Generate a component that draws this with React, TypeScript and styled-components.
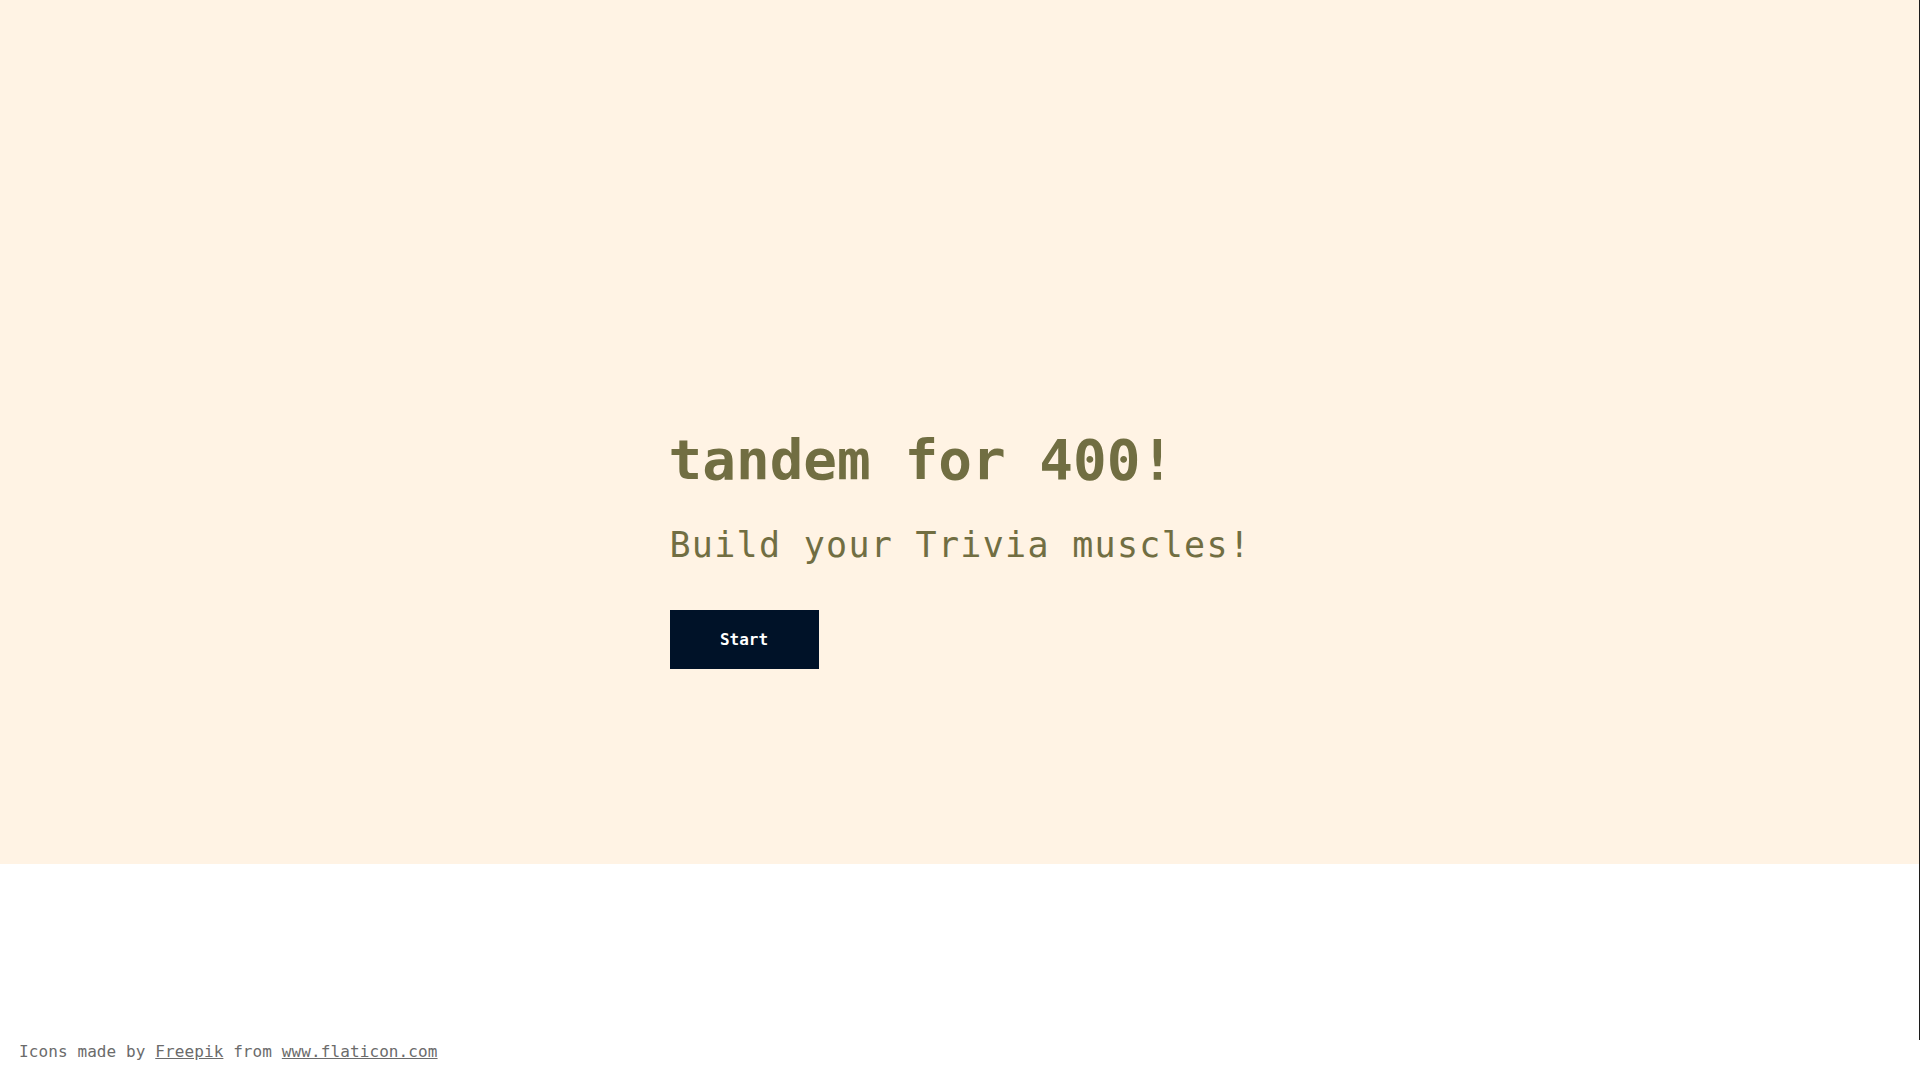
import styled, {createGlobalStyle} from 'styled-components'

const GlobalStyle = createGlobalStyle`
    html, body {
        margin: 0;
        padding: 0;
        background: #ffffff;
    }
    body {
        font-family: "DejaVu Sans Mono", "Liberation Mono", monospace;
    }
`

export default function App() {
    return (
        <>
            <GlobalStyle />
            <Page>
                <Hero>
                    <Content>
                        <Title>tandem for 400!</Title>
                        <Subtitle>Build your Trivia muscles!</Subtitle>
                        <StartButton>Start</StartButton>
                    </Content>
                </Hero>
            </Page>
            <Credits>
                Icons made by <CreditLink href="#">Freepik</CreditLink> from <CreditLink href="#">www.flaticon.com</CreditLink>
            </Credits>
        </>
    )
}

const Page = styled.div`
    height: 1040px;
    border-right: 1px solid #1c1c1c;
    box-sizing: border-box;
`
const Hero = styled.section`
    height: 864px;
    background-color: #fff3e4;
    box-sizing: border-box;
    padding-top: 427px;
`
const Content = styled.div`
    width: 584px;
    margin: 0 auto;
    display: flex;
    flex-direction: column;
    align-items: flex-start;
`
const Title = styled.h1`
    margin: 0 0 0 1px;
    font-family: "DejaVu Sans Mono", monospace;
    font-size: 56px;
    font-weight: 700;
    line-height: normal;
    white-space: nowrap;
    color: #716e42;
`
const Subtitle = styled.h2`
    margin: 33px 0 0 2px;
    font-family: "DejaVu Sans Mono", monospace;
    font-size: 35px;
    font-weight: 400;
    letter-spacing: 1.3px;
    line-height: normal;
    white-space: nowrap;
    color: #716e42;
`
const StartButton = styled.button`
    margin: 45px 0 0 2px;
    width: 149px;
    height: 59px;
    border: none;
    background-color: #001228;
    color: #ffffff;
    font-family: "DejaVu Sans Mono", monospace;
    font-size: 16px;
    font-weight: 700;
    cursor: pointer;
`
const Credits = styled.footer`
    padding-left: 19px;
    font-family: "DejaVu Sans Mono", monospace;
    font-size: 16px;
    letter-spacing: 0.1px;
    line-height: 24px;
    color: #6b6b6b;
`
const CreditLink = styled.a`
    color: #6b6b6b;
    text-decoration: underline;
`
